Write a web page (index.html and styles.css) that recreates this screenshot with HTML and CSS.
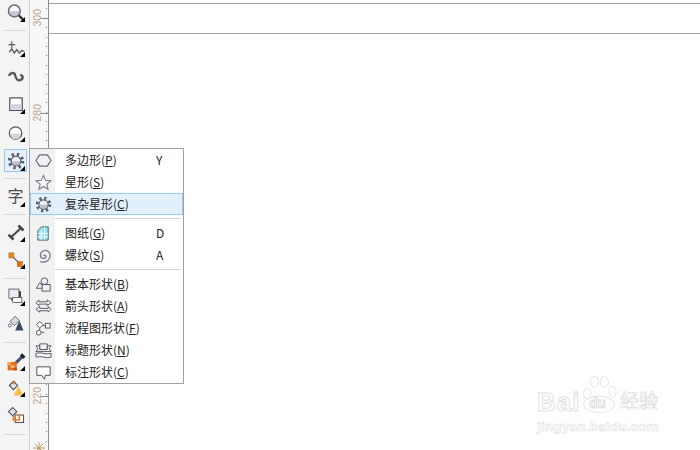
FILE: index.html
```html
<!DOCTYPE html>
<html lang="zh">
<head>
  <meta charset="UTF-8">
  <title>CorelDRAW 工具箱</title>
  <link rel="stylesheet" href="styles.css">
</head>
<body>
  <div class="app">
    <!-- 工具箱 -->
    <div class="toolbox">
      <div class="tool m1"><svg viewBox="0 0 24 24"><circle cx="10" cy="9.500" r="7" fill="#fff" stroke="#62626e" stroke-width="1.800"/><path d="M4 10h12a6 6 0 0 1-12 0z" fill="#c4c4d4"/><path d="M15.500 15l6 6" stroke="#2c2c30" stroke-width="2.800"/></svg><i></i></div>
      <div class="sep m5"></div>
      <div class="tool m5"><svg viewBox="0 0 24 24" fill="none" stroke="#5c5c68" stroke-width="1.400"><path d="M3 8h8M7 4v8"/><path d="M4 17l3-4 3 5 3-4 3 4 3-3 3 1" stroke-width="1.700"/></svg><i></i></div>
      <div class="tool m4"><svg viewBox="0 0 24 24" fill="none" stroke="#55555f" stroke-width="2.800"><path d="M4 12c0-4 6-5 7-1s2 7 6 6 4-6 0-6"/></svg></div>
      <div class="tool m5"><svg viewBox="0 0 24 24"><rect x="4.500" y="3.500" width="15" height="15" fill="#fff" stroke="#55555f" stroke-width="1.500"/><rect x="5.500" y="11" width="13" height="7" fill="#d4d4e2"/></svg><i></i></div>
      <div class="tool m4"><svg viewBox="0 0 24 24"><circle cx="11.500" cy="12" r="7.500" fill="#fff" stroke="#55555f" stroke-width="1.500"/><path d="M5 13h13a6.500 6.500 0 0 1-13 0z" fill="#d4d4e2"/></svg><i></i></div>
      <div class="tool active m4"><svg viewBox="0 0 24 24"><use href="#gear"/></svg><i></i></div>
      <div class="sep m6"></div>
      <div class="tool glyph m4">字<i></i></div>
      <div class="sep m7"></div>
      <div class="tool m6"><svg viewBox="0 0 24 24" fill="none" stroke="#44444c"><path d="M6 17L18 6" stroke-width="2.400"/><path d="M3 14l6 6M15 3l6 6" stroke-width="3"/></svg><i></i></div>
      <div class="tool m3"><svg viewBox="0 0 24 24"><path d="M7 7l10 10" stroke="#55555f" stroke-width="1.500"/><rect x="3.500" y="3.500" width="6" height="6" fill="#ef8a17" stroke="#8a5a20" stroke-width=".6"/><rect x="13.500" y="14" width="6" height="6" fill="#ef6c00" stroke="#8a5a20" stroke-width=".6"/></svg><i></i></div>
      <div class="sep m6"></div>
      <div class="tool m6"><svg viewBox="0 0 24 24"><rect x="6" y="5" width="12" height="11" fill="#3f3f4a"/><rect x="3.500" y="2.500" width="12" height="11" fill="#ececf2" stroke="#55555f"/><rect x="8" y="12.500" width="11" height="6" fill="#fff" stroke="#55555f"/></svg><i></i></div>
      <div class="tool m2"><svg viewBox="0 0 24 24"><path d="M5 10l6-6 5 5-6 6z" fill="#dcdce6" stroke="#55555f"/><path d="M16 9l5 12H11z" fill="#3d4a66"/><circle cx="4.500" cy="15" r="1.800" fill="none" stroke="#55555f"/></svg></div>
      <div class="sep m7"></div>
      <div class="tool m7"><svg viewBox="0 0 24 24"><path d="M11 14l8-8" stroke="#46536e" stroke-width="3.800"/><path d="M18 3l4 4" stroke="#20242e" stroke-width="4"/><rect x="2" y="12" width="11" height="10" fill="#e8701a"/><rect x="2" y="12" width="4" height="4" fill="#f5a763"/><rect x="6" y="16" width="4" height="3" fill="#f8c397"/><rect x="9" y="19" width="4" height="3" fill="#bd4f0b"/></svg><i></i></div>
      <div class="tool m2"><svg viewBox="0 0 24 24"><path d="M4 9l5-5 5 5-5 5z" fill="#e2e2ea" stroke="#55555f" stroke-width="1.300"/><path d="M8 7l3-3" stroke="#ee7d14" stroke-width="2"/><path d="M15 10l6 11H9z" fill="#f5c04a"/></svg><i></i></div>
      <div class="tool m3"><svg viewBox="0 0 24 24"><path d="M3 8l5-5 5 5-5 5z" fill="#e2e2ea" stroke="#55555f" stroke-width="1.300"/><rect x="11" y="12" width="10" height="9" fill="#fff" stroke="#55555f" stroke-width="1.300"/><path d="M9 13v5h7v-7" fill="none" stroke="#ee7d14" stroke-width="2"/></svg></div>
      <div class="sep m7"></div>
    </div>

    <!-- 纵向标尺 -->
    <div class="ruler">
      <span class="ruler-label label-300">300</span>
      <span class="ruler-tick tick-300"></span>
      <span class="ruler-label label-280">280</span>
      <span class="ruler-tick tick-280"></span>
      <span class="ruler-label label-220">220</span>
      <span class="ruler-tick tick-220"></span>
      <svg class="ruler-mark" viewBox="0 0 12 12"><path d="M6 0v12M0 6h12M2 2l8 8M10 2l-8 8" stroke="#b89a5a"/></svg>
    </div>

    <!-- 页面区域 -->
    <div class="canvas">
      <div class="top-strip"></div>
      <div class="page-edge"></div>
    </div>

    <!-- 弹出菜单 -->
    <div class="menu">
      <div class="item"><span class="ico"><svg viewBox="0 0 18 18"><path d="M5 3h8l4 6-4 6H5L1 9z" fill="#f0f0f6" stroke="#6a6a78" stroke-width="1.300" stroke-linejoin="round"/></svg></span><span class="name">多边形(<u>P</u>)</span><span class="key">Y</span></div>
      <div class="item"><span class="ico"><svg viewBox="0 0 18 18"><path d="M9 1.500l2.200 5.200 5.600.4-4.300 3.600 1.400 5.500L9 13.200l-4.900 3 1.400-5.500L1.200 7.100l5.600-.4z" fill="#f8f8fb" stroke="#7a7a88" stroke-width="1.100"/></svg></span><span class="name">星形(<u>S</u>)</span></div>
      <div class="item hover"><span class="ico"><svg viewBox="0 0 24 24"><use href="#gear"/></svg></span><span class="name">复杂星形(<u>C</u>)</span></div>
      <div class="line"></div>
      <div class="item"><span class="ico"><svg viewBox="0 0 18 18"><path d="M7 2h7v14H3V6z" fill="#8fe6ee" stroke="#4a5a70"/><path d="M3 9h11M3 12.500h11M6.500 6v10M10 2v14" stroke="#fff"/></svg></span><span class="name">图纸(<u>G</u>)</span><span class="key">D</span></div>
      <div class="item"><span class="ico"><svg viewBox="0 0 18 18" fill="none" stroke="#77778a" stroke-width="1.400"><path d="M9 9.500c.5-1.500 3-.5 2.500 1.200-.6 2-4.500 2-5.500-.5S7 3.500 11 3.500c3.500 0 6 4 4.500 8S9 17 5.500 15.500"/></svg></span><span class="name">螺纹(<u>S</u>)</span><span class="key">A</span></div>
      <div class="line"></div>
      <div class="item"><span class="ico"><svg viewBox="0 0 18 18" fill="#f2f2f8" stroke="#55555f"><circle cx="10" cy="5.500" r="3.500"/><path d="M5 7l5 6H1.500z"/><rect x="7.500" y="9" width="8.500" height="7"/></svg></span><span class="name">基本形状(<u>B</u>)</span></div>
      <div class="item"><span class="ico"><svg viewBox="0 0 18 18" fill="#f2f2f8" stroke="#55555f"><path d="M1 5l3-3v2h9V2l4 3-4 3V6.500H4V8z"/><path d="M17 12l-3-3v2H5V9l-4 3 4 3v-1.500h9V15z"/></svg></span><span class="name">箭头形状(<u>A</u>)</span></div>
      <div class="item"><span class="ico"><svg viewBox="0 0 18 18" fill="#fff" stroke="#55555f"><path d="M5 13h5M5 8v3M8 6h3"/><path d="M5 1.500L8.500 5 5 8.500 1.500 5z"/><rect x="11" y="3.500" width="5" height="5"/><circle cx="4" cy="13.500" r="2.500"/></svg></span><span class="name">流程图形状(<u>F</u>)</span></div>
      <div class="item"><span class="ico"><svg viewBox="0 0 18 18" fill="#f2f2f8" stroke="#55555f"><path d="M5 2h8v6H5z"/><path d="M1 4h4v4h8V4h4l-2 3 2 3H1l2-3z"/><path d="M1 12c5-2 11 2 16 0v4c-5 2-11-2-16 0z"/></svg></span><span class="name">标题形状(<u>N</u>)</span></div>
      <div class="item"><span class="ico"><svg viewBox="0 0 18 18"><path d="M2 3h14v9h-5l-1 4-3-4H2z" fill="#fff" stroke="#44444c"/></svg></span><span class="name">标注形状(<u>C</u>)</span></div>
    </div>

    <!-- 水印 -->
    <div class="mark">
      <div class="mark-top">
        <span class="mark-bai">Bai</span>
        <span class="mark-paw"><svg viewBox="0 0 40 42" fill="#fff" stroke="#e6e6e6" stroke-width="1.200"><ellipse cx="7" cy="20" rx="4" ry="6"/><ellipse cx="15" cy="7" rx="4.500" ry="6"/><ellipse cx="26" cy="7" rx="4.500" ry="6"/><ellipse cx="35" cy="18" rx="4" ry="6"/><ellipse cx="20" cy="32" rx="17" ry="9"/></svg><b>du</b></span>
        <span class="mark-cn">经验</span>
      </div>
      <div class="mark-url">jingyan.baidu.com</div>
    </div>
  </div>

  <svg class="defs" width="0" height="0">
    <defs>
      <g id="gear">
        <circle cx="12" cy="12" r="8.500" fill="none" stroke="#5e5e68" stroke-width="5" stroke-dasharray="3 3.680"/>
        <circle cx="12" cy="12" r="6.500" fill="#eeeef4" stroke="#5e5e68" stroke-width="1.600"/>
        <path d="M6.500 12.500h11a5.500 5.500 0 0 1-11 0z" fill="#bcbccc"/>
      </g>
    </defs>
  </svg>
</body>
</html>
```
FILE: styles.css
```css
* {
  box-sizing: border-box;
  margin: 0;
  padding: 0;
}
body {
  background: #fff;
  font-family: "Noto Sans CJK SC", "Liberation Sans", sans-serif;
  overflow: hidden;
}
.app {
  position: relative;
  display: flex;
  width: 700px;
  height: 450px;
  overflow: hidden;
}
.defs {
  position: absolute;
}

/* 工具箱 */
.toolbox {
  display: flex;
  flex-direction: column;
  align-items: flex-start;
  width: 29px;
  flex: none;
  background: #f4f4f4;
  padding-left: 4px;
}
.tool {
  position: relative;
  display: flex;
  align-items: center;
  justify-content: center;
  width: 23px;
  height: 24px;
  flex: none;
}
.tool svg {
  width: 20px;
  height: 20px;
}
.tool i {
  position: absolute;
  right: 2px;
  bottom: 3px;
  width: 0;
  height: 0;
  border-left: 5px solid transparent;
  border-bottom: 5px solid #000;
}
.m1 { margin-top: 1px; }
.m2 { margin-top: 2px; }
.m3 { margin-top: 3px; }
.m4 { margin-top: 4px; }
.m5 { margin-top: 5px; }
.m6 { margin-top: 6px; }
.m7 { margin-top: 7px; }
.tool.active {
  height: 23px;
  background: #e4f1fd;
  border: 1px solid #9cc5ea;
}
.tool.active svg {
  width: 18px;
  height: 18px;
}
.tool.active i {
  right: 1px;
  bottom: 0;
}
.glyph {
  font-size: 16px;
  color: #4a4a52;
}
.glyph i {
  bottom: 0;
}
.sep {
  width: 22px;
  height: 1px;
  flex: none;
  background: #d8d8d8;
}

/* 标尺 */
.ruler {
  position: relative;
  width: 20px;
  flex: none;
  background:
    repeating-linear-gradient(to bottom, transparent 0 8.4px, #777 8.4px 9.4px) 16px 0 / 1px 100% no-repeat,
    #f8f8f8;
  border-left: 1px solid #d0d0d0;
  border-right: 1px solid #8c8c8c;
}
.ruler-label {
  position: absolute;
  left: 3px;
  font-family: "Liberation Sans", sans-serif;
  font-size: 10.500px;
  line-height: 9px;
  color: #b9a590;
  writing-mode: vertical-rl;
  transform: rotate(180deg);
}
.label-300 { top: 9px; }
.label-280 { top: 104px; }
.label-220 { top: 387px; }
.ruler-tick {
  position: absolute;
  left: 11px;
  width: 7px;
  height: 1px;
  background: #8c8c8c;
}
.tick-300 { top: 18px; }
.tick-280 { top: 113px; }
.tick-220 { top: 396px; }
.ruler-mark {
  position: absolute;
  left: 3px;
  top: 442px;
  width: 12px;
  height: 12px;
}

/* 页面 */
.canvas {
  flex: 1;
  background: #fff;
}
.top-strip {
  height: 4px;
  border-bottom: 1px solid #a0a0a0;
}
.page-edge {
  height: 30px;
  border-bottom: 1px solid #a6a6a6;
}

/* 菜单 */
.menu {
  position: absolute;
  left: 29px;
  top: 148px;
  width: 155px;
  height: 236px;
  background: linear-gradient(to right, #f1f1f1 25px, #fff 25px);
  border: 1px solid #a0a0a0;
  font-size: 12px;
  color: #222;
}
.item {
  display: flex;
  align-items: center;
  height: 22px;
  line-height: 18px;
  border: 1px solid transparent;
}
.item.hover {
  background: #e2f0fd;
  border-color: #99c9ef;
}
.ico {
  display: flex;
  align-items: center;
  justify-content: center;
  width: 24px;
  flex: none;
}
.ico svg {
  width: 17px;
  height: 17px;
}
.name {
  margin-left: 10px;
  width: 91px;
  flex: none;
  white-space: nowrap;
}
.line {
  height: 1px;
  margin: 3px 2px 3px 25px;
  background: #d4d4d4;
}

/* 水印 */
.mark {
  position: absolute;
  left: 537px;
  top: 374px;
  width: 150px;
  font-family: "Liberation Sans", "Noto Sans CJK SC", sans-serif;
}
.mark-top {
  display: flex;
  align-items: flex-end;
  height: 40px;
}
.mark-bai {
  width: 44px;
  flex: none;
  font-size: 26px;
  font-weight: 700;
  letter-spacing: 1px;
  color: #fff;
  -webkit-text-stroke: 1px #e2e2e2;
  line-height: 24px;
}
.mark-paw {
  position: relative;
  width: 36px;
  height: 39px;
  flex: none;
}
.mark-paw svg {
  width: 36px;
  height: 39px;
}
.mark-paw b {
  position: absolute;
  left: 8px;
  bottom: 3px;
  font-size: 14px;
  color: #fff;
  -webkit-text-stroke: 1px #dedede;
}
.mark-cn {
  margin-left: 3px;
  font-size: 19px;
  font-weight: 400;
  color: #fff;
  -webkit-text-stroke: .7px #dcdcdc;
  line-height: 24px;
  white-space: nowrap;
}
.mark-url {
  margin-top: 5px;
  font-size: 13.500px;
  font-weight: 700;
  color: #fff;
  -webkit-text-stroke: .7px #e4e4e4;
  letter-spacing: .2px;
  white-space: nowrap;
}
```
